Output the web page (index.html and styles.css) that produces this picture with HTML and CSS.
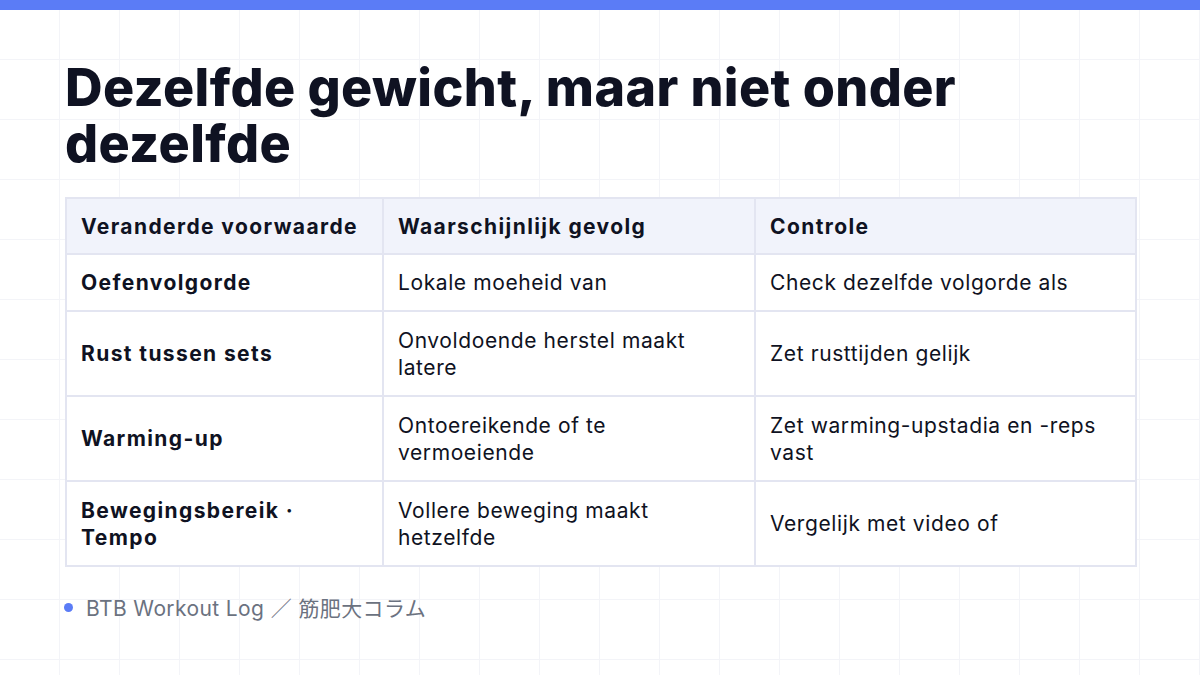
FILE: index.html
```html
<!DOCTYPE html>
<html lang="nl">
<head>
<meta charset="utf-8">
<title>Dezelfde gewicht</title>
<link rel="stylesheet" href="styles.css">
</head>
<body>
<div class="topbar"></div>
<main class="slide">
  <h1 class="title">Dezelfde gewicht, maar niet onder dezelfde</h1>
  <table class="grid-table">
    <colgroup>
      <col class="c1"><col class="c2"><col class="c3">
    </colgroup>
    <thead>
      <tr><th>Veranderde voorwaarde</th><th>Waarschijnlijk gevolg</th><th>Controle</th></tr>
    </thead>
    <tbody>
      <tr class="short"><td class="key">Oefenvolgorde</td><td>Lokale moeheid van</td><td>Check dezelfde volgorde als</td></tr>
      <tr><td class="key">Rust tussen sets</td><td>Onvoldoende herstel maakt latere</td><td>Zet rusttijden gelijk</td></tr>
      <tr><td class="key">Warming-up</td><td>Ontoereikende of te vermoeiende</td><td>Zet warming-upstadia en -reps vast</td></tr>
      <tr><td class="key">Bewegingsbereik · Tempo</td><td>Vollere beweging maakt hetzelfde</td><td>Vergelijk met video of</td></tr>
    </tbody>
  </table>
  <footer class="source"><span class="dot"></span><span>BTB Workout Log ／ 筋肥大コラム</span></footer>
</main>
</body>
</html>
```
FILE: styles.css
```css
html, body {
  margin: 0;
  padding: 0;
}
body {
  width: 1200px;
  height: 675px;
  overflow: hidden;
  background-color: #ffffff;
  background-image:
    linear-gradient(to right, #f3f4f8 1px, transparent 1px),
    linear-gradient(to bottom, #f3f4f8 1px, transparent 1px);
  background-size: 60px 60px;
  background-position: -1px -1px;
  font-family: Inter, "Noto Sans CJK JP", sans-serif;
  color: #0f1222;
}
.topbar {
  height: 10px;
  background: #5b7cf6;
}
.slide {
  padding: 0 65px;
}
.title {
  margin: 50px 0 0;
  font-size: 52px;
  line-height: 56px;
  font-weight: 800;
  letter-spacing: 0.4px;
  color: #0f1222;
  width: 960px;
}
.grid-table {
  margin-top: 25px;
  width: 1070px;
  border-collapse: collapse;
  table-layout: fixed;
  font-size: 21px;
  line-height: 27px;
  letter-spacing: 0.6px;
  background: #ffffff;
}
.c1 { width: 317px; }
.c2 { width: 372px; }
.c3 { width: 381px; }
.grid-table th,
.grid-table td {
  border: 2px solid #e3e5f1;
  padding: 0 15px 0 14px;
  text-align: left;
  vertical-align: middle;
}
.grid-table th {
  height: 54px;
  background: #f1f3fb;
  font-weight: 700;
  letter-spacing: 1.4px;
}
.grid-table td {
  height: 83px;
  font-weight: 400;
}
.grid-table tr.short td {
  height: 55px;
}
.grid-table td.key {
  font-weight: 700;
  letter-spacing: 1.4px;
}
.source {
  margin-top: 25px;
  display: flex;
  align-items: center;
  gap: 13px;
  font-size: 21px;
  letter-spacing: 0.4px;
  color: #6b7280;
}
.dot {
  width: 9px;
  height: 9px;
  border-radius: 50%;
  background: #5b7cf6;
  margin-left: -1px;
}
```
